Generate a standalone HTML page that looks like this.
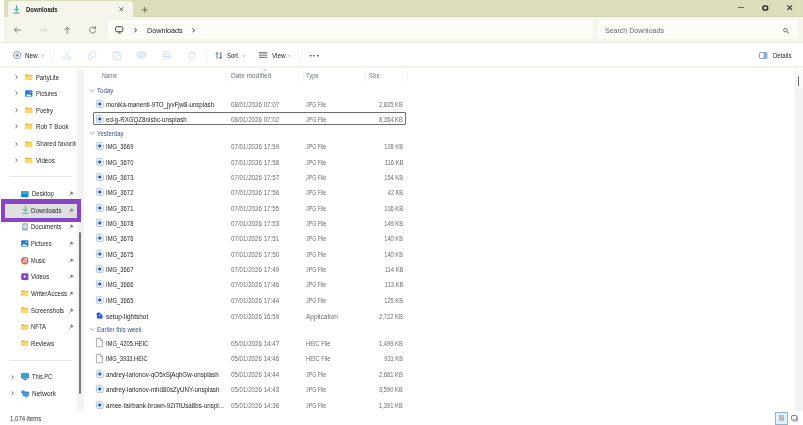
<!DOCTYPE html>
<html><head><meta charset="utf-8"><title>Downloads</title>
<style>
html,body{margin:0;padding:0;}
body{width:803px;height:425px;overflow:hidden;background:#fff;position:relative;font-family:"Liberation Sans",sans-serif;font-size:7px;color:#444;}
#w{position:absolute;left:0;top:0;width:803px;height:425px;filter:blur(0.35px);will-change:transform;}
.a{position:absolute;}
.t{position:absolute;white-space:nowrap;line-height:10px;height:10px;font-size:7px;transform-origin:0 50%;}
.r{transform-origin:100% 50%;}
svg{position:absolute;overflow:visible;}
</style></head><body>
<div id="w">
<div class="a" style="left:0px;top:0px;width:803px;height:17px;background:#dcddba;"></div>
<div class="a" style="left:0px;top:0px;width:3.5px;height:43px;background:#fcfcf8;"></div>
<div class="a" style="left:133px;top:16px;width:670px;height:1px;background:#d4d5b4;"></div>
<div class="a" style="left:7.5px;top:1px;width:125.5px;height:16.5px;background:#f5f5ec;border-radius:4px 4px 0 0;"></div>
<svg style="left:13px;top:5px" width="7" height="9" viewBox="0 0 7 9"><path d="M3.5 0.3V5.8M1 3.6L3.5 6L6 3.6" stroke="#2fa98a" stroke-width="1" fill="none"/><path d="M0.3 8H6.7" stroke="#2fa98a" stroke-width="1"/></svg>
<div class="t" style="left:26px;top:5.1px;color:#222;font-size:7px;transform:scaleX(0.846);font-weight:bold;">Downloads</div>
<svg style="left:119.3px;top:6.8px" width="4.6" height="4.6" viewBox="0 0 4.6 4.6"><path d="M0.3 0.3L4.3 4.3M4.3 0.3L0.3 4.3" stroke="#444" stroke-width="0.8"/></svg>
<svg style="left:142px;top:6.8px" width="5.6" height="5.6" viewBox="0 0 5.6 5.6"><path d="M2.8 0V5.6M0 2.8H5.6" stroke="#55553a" stroke-width="0.8"/></svg>
<div class="a" style="left:738.3px;top:6.8px;width:5.6px;height:0.9px;background:#6a6a58;"></div>
<svg style="left:761.5px;top:4.5px" width="6.6" height="6" viewBox="0 0 6.6 6"><rect x="1" y="1" width="4.6" height="4" fill="none" stroke="#333" stroke-width="1.7" rx="1.6"/></svg>
<svg style="left:786.8px;top:4.8px" width="5.4" height="5.2" viewBox="0 0 5.4 5.2"><path d="M0.3 0.3L5.1 4.9M5.1 0.3L0.3 4.9" stroke="#333" stroke-width="1.1"/></svg>
<div class="a" style="left:3.5px;top:17px;width:799.5px;height:25.5px;background:#f5f5ec;"></div>
<div class="a" style="left:108px;top:19.8px;width:485.4px;height:19.4px;background:#fdfdf8;border-radius:2px;"></div>
<div class="a" style="left:596.6px;top:19.8px;width:201.2px;height:19.4px;background:#fdfdf8;border-radius:2px;"></div>
<svg style="left:14px;top:27px" width="7" height="6" viewBox="0 0 7 6"><path d="M6.8 3H0.6M3 0.4L0.4 3L3 5.6" stroke="#606060" stroke-width="0.8" fill="none"/></svg>
<svg style="left:40px;top:27px" width="7" height="6" viewBox="0 0 7 6"><path d="M0.2 3H6.4M4 0.4L6.6 3L4 5.6" stroke="#cdcdc4" stroke-width="0.8" fill="none"/></svg>
<svg style="left:64px;top:26.5px" width="6.4" height="7" viewBox="0 0 6.4 7"><path d="M3.2 6.8V0.6M0.6 3L3.2 0.4L5.8 3" stroke="#606060" stroke-width="0.8" fill="none"/></svg>
<svg style="left:88.8px;top:26.2px" width="7.2" height="7.4" viewBox="0 0 7.2 7.4"><path d="M6 2.2A3 3 0 1 0 6.6 4.3" stroke="#606060" stroke-width="0.8" fill="none"/><path d="M6.5 0.4V2.4H4.5" stroke="#606060" stroke-width="0.8" fill="none"/></svg>
<svg style="left:115.2px;top:26px" width="8.5" height="7.6" viewBox="0 0 8.5 7.6"><rect x="0.7" y="0.7" width="7.1" height="5" rx="1" fill="none" stroke="#444" stroke-width="1"/><path d="M2.8 7H5.7" stroke="#444" stroke-width="1"/></svg>
<svg style="left:133.6px;top:28px" width="3.2" height="4.4" viewBox="0 0 3.2 4.4"><path d="M0.5 0.3L2.6 2.2L0.5 4.1" stroke="#333" stroke-width="1" fill="none"/></svg>
<div class="t" style="left:146.7px;top:25.5px;color:#222;font-size:8px;transform:scaleX(0.902);">Downloads</div>
<svg style="left:192.2px;top:28px" width="3.2" height="4.4" viewBox="0 0 3.2 4.4"><path d="M0.5 0.3L2.6 2.2L0.5 4.1" stroke="#333" stroke-width="1" fill="none"/></svg>
<div class="t" style="left:605.3px;top:26.0px;color:#666;font-size:7.6px;transform:scaleX(0.924);">Search Downloads</div>
<svg style="left:783.4px;top:27.5px" width="6.4" height="5.4" viewBox="0 0 6.4 5.4"><circle cx="2.4" cy="2.2" r="1.8" fill="none" stroke="#555" stroke-width="0.8"/><path d="M3.8 3.6L5.8 5.2" stroke="#555" stroke-width="0.9"/></svg>
<div class="a" style="left:0px;top:42.3px;width:803px;height:0.9px;background:#ebebdf;"></div>
<div class="a" style="left:0px;top:65.8px;width:803px;height:2px;background:#f2f2ec;"></div>
<svg style="left:12.5px;top:51px" width="8.4" height="8.4" viewBox="0 0 8.4 8.4"><circle cx="4.2" cy="4.2" r="3.6" fill="none" stroke="#8590a2" stroke-width="0.9"/><path d="M4.2 2.4V6M2.4 4.2H6" stroke="#3c6aa8" stroke-width="0.8"/></svg>
<div class="t" style="left:25.3px;top:51.1px;color:#222;font-size:7.4px;transform:scaleX(0.858);">New</div>
<svg style="left:41.3px;top:54.6px" width="3" height="2" viewBox="0 0 3 2"><path d="M0.2 0.3L1.5 1.6L2.8 0.3" stroke="#888" stroke-width="0.6" fill="none"/></svg>
<div class="a" style="left:53px;top:49px;width:0.8px;height:13px;background:#f5f5f5;"></div>
<svg style="left:62.7px;top:51px" width="7.8" height="9" viewBox="0 0 7.8 9"><path d="M1.5 0.5L5.5 5.5M6.3 0.5L2.3 5.5" stroke="#d3dfed" stroke-width="0.9" fill="none"/><circle cx="1.8" cy="7" r="1.4" fill="none" stroke="#d3dfed" stroke-width="0.9"/><circle cx="6" cy="7" r="1.4" fill="none" stroke="#d3dfed" stroke-width="0.9"/></svg>
<svg style="left:87.7px;top:51px" width="8.3" height="9" viewBox="0 0 8.3 9"><rect x="2.8" y="0.5" width="5" height="5.6" rx="1" fill="none" stroke="#d3dfed" stroke-width="0.9"/><path d="M2.2 2.6H1.4Q0.5 2.6 0.5 3.5V7.6Q0.5 8.5 1.4 8.5H4.2Q5 8.5 5 7.6" fill="none" stroke="#d3dfed" stroke-width="0.9"/></svg>
<svg style="left:112.8px;top:51px" width="8" height="9" viewBox="0 0 8 9"><rect x="0.5" y="1.2" width="6.6" height="7.3" rx="1" fill="none" stroke="#d3dfed" stroke-width="0.9"/><rect x="2.2" y="0.3" width="3.2" height="1.8" rx="0.6" fill="#d3dfed"/><rect x="3.6" y="4" width="3.8" height="4.8" fill="#fff" stroke="#d3dfed" stroke-width="0.8"/></svg>
<svg style="left:137.1px;top:51px" width="9.3" height="9" viewBox="0 0 9.3 9"><rect x="0.5" y="1" width="8.2" height="5.4" rx="1" fill="#d3dfed" opacity="0.55"/><rect x="0.5" y="1" width="8.2" height="5.4" rx="1" fill="none" stroke="#d3dfed" stroke-width="0.9"/><path d="M3.4 6.6V8.6L5.8 6.6" fill="#d3dfed"/></svg>
<svg style="left:162.7px;top:51px" width="7.8" height="9" viewBox="0 0 7.8 9"><rect x="0.5" y="0.8" width="6.8" height="7.4" rx="1" fill="none" stroke="#d3dfed" stroke-width="0.9"/><path d="M0.5 3.2H7.3M0.5 5.6H7.3" stroke="#d3dfed" stroke-width="1.1"/></svg>
<svg style="left:188px;top:51px" width="8" height="9" viewBox="0 0 8 9"><path d="M1.2 2.2L1.8 7.8Q1.9 8.5 2.6 8.5H5.4Q6.1 8.5 6.2 7.8L6.8 2.2" fill="none" stroke="#d3dfed" stroke-width="0.9"/><path d="M0.3 2.2H7.7M2.8 2V0.8H5.2V2" stroke="#d3dfed" stroke-width="0.9" fill="none"/></svg>
<div class="a" style="left:206px;top:49px;width:0.8px;height:13px;background:#f5f5f5;"></div>
<svg style="left:214.8px;top:51.9px" width="8" height="7" viewBox="0 0 8 7"><path d="M2 6.8V0.6M0.4 2.2L2 0.5L3.6 2.2" stroke="#3c6aa8" stroke-width="0.9" fill="none"/><path d="M5.8 0.2V6.4M4.2 4.8L5.8 6.5L7.4 4.8" stroke="#555" stroke-width="0.9" fill="none"/></svg>
<div class="t" style="left:227px;top:51.1px;color:#222;font-size:7.4px;transform:scaleX(0.811);">Sort</div>
<svg style="left:241.5px;top:54.6px" width="3" height="2" viewBox="0 0 3 2"><path d="M0.2 0.3L1.5 1.6L2.8 0.3" stroke="#888" stroke-width="0.6" fill="none"/></svg>
<svg style="left:259.3px;top:52.2px" width="8.3" height="6.2" viewBox="0 0 8.3 6.2"><path d="M0 0.8H8.3M0 3.1H8.3M0 5.4H8.3" stroke="#888" stroke-width="1.4"/></svg>
<div class="t" style="left:271.8px;top:51.1px;color:#222;font-size:7.4px;transform:scaleX(0.856);">View</div>
<svg style="left:288.2px;top:54.6px" width="3" height="2" viewBox="0 0 3 2"><path d="M0.2 0.3L1.5 1.6L2.8 0.3" stroke="#888" stroke-width="0.6" fill="none"/></svg>
<div class="a" style="left:300.8px;top:49px;width:0.8px;height:13px;background:#f5f5f5;"></div>
<svg style="left:310.2px;top:54.9px" width="1.6" height="1.6" viewBox="0 0 1.6 1.6"><circle cx="0.8" cy="0.8" r="0.8" fill="#222"/></svg>
<svg style="left:313.4px;top:54.9px" width="1.6" height="1.6" viewBox="0 0 1.6 1.6"><circle cx="0.8" cy="0.8" r="0.8" fill="#222"/></svg>
<svg style="left:316.59999999999997px;top:54.9px" width="1.6" height="1.6" viewBox="0 0 1.6 1.6"><circle cx="0.8" cy="0.8" r="0.8" fill="#222"/></svg>
<svg style="left:759.4px;top:52px" width="8.5" height="7" viewBox="0 0 8.5 7"><rect x="0.5" y="0.5" width="7.5" height="6" rx="1" fill="#fff" stroke="#8a97a8" stroke-width="0.9"/><rect x="4.6" y="1" width="2.9" height="5" fill="#6fb0e8"/></svg>
<div class="t" style="left:772.5px;top:51.1px;color:#222;font-size:7px;transform:scaleX(0.86);">Details</div>
<div class="a" style="left:76.6px;top:69px;width:7.4px;height:342.4px;background:#f3f3f3;"></div>
<div class="a" style="left:79.4px;top:232.3px;width:1.8px;height:162px;background:#7a7a7a;border-radius:1px;"></div>
<svg style="left:14.8px;top:75.0px" width="3" height="4.4" viewBox="0 0 3 4.4"><path d="M0.5 0.4L2.4 2.2L0.5 4" stroke="#555" stroke-width="0.85" fill="none"/></svg>
<svg style="left:25.2px;top:74.0px" width="7.4" height="6.2" viewBox="0 0 7.4 6.2"><path d="M0.2 0.9Q0.2 0.3 0.8 0.3H2.7L3.6 1.1H6.6Q7.2 1.1 7.2 1.7V5.4Q7.2 6 6.6 6H0.8Q0.2 6 0.2 5.4Z" fill="#efb935"/><path d="M0.2 2H7.2V5.4Q7.2 6 6.6 6H0.8Q0.2 6 0.2 5.4Z" fill="#fbd868"/></svg>
<div class="t" style="left:36px;top:72.7px;color:#262626;font-size:7px;transform:scaleX(0.829);">PartyLite</div>
<svg style="left:14.8px;top:91.3px" width="3" height="4.4" viewBox="0 0 3 4.4"><path d="M0.5 0.4L2.4 2.2L0.5 4" stroke="#555" stroke-width="0.85" fill="none"/></svg>
<svg style="left:25px;top:89.9px" width="7.6" height="7.2" viewBox="0 0 7.6 7.2"><rect x="0.2" y="0.2" width="7.2" height="6.8" rx="1" fill="#1f74d4"/><path d="M0.7 6.4L2.9 3.6L4.2 5L5.2 4.2L7 6.4Z" fill="#e4f1ff"/><circle cx="5.3" cy="2.2" r="0.8" fill="#e4f1ff"/></svg>
<div class="t" style="left:36px;top:89.0px;color:#262626;font-size:7px;transform:scaleX(0.838);">Pictures</div>
<svg style="left:14.8px;top:108.1px" width="3" height="4.4" viewBox="0 0 3 4.4"><path d="M0.5 0.4L2.4 2.2L0.5 4" stroke="#555" stroke-width="0.85" fill="none"/></svg>
<svg style="left:25.2px;top:107.1px" width="7.4" height="6.2" viewBox="0 0 7.4 6.2"><path d="M0.2 0.9Q0.2 0.3 0.8 0.3H2.7L3.6 1.1H6.6Q7.2 1.1 7.2 1.7V5.4Q7.2 6 6.6 6H0.8Q0.2 6 0.2 5.4Z" fill="#efb935"/><path d="M0.2 2H7.2V5.4Q7.2 6 6.6 6H0.8Q0.2 6 0.2 5.4Z" fill="#fbd868"/></svg>
<div class="t" style="left:36px;top:105.8px;color:#262626;font-size:7px;transform:scaleX(0.84);">Poetry</div>
<svg style="left:14.8px;top:124.39999999999999px" width="3" height="4.4" viewBox="0 0 3 4.4"><path d="M0.5 0.4L2.4 2.2L0.5 4" stroke="#555" stroke-width="0.85" fill="none"/></svg>
<svg style="left:25.2px;top:123.39999999999999px" width="7.4" height="6.2" viewBox="0 0 7.4 6.2"><path d="M0.2 0.9Q0.2 0.3 0.8 0.3H2.7L3.6 1.1H6.6Q7.2 1.1 7.2 1.7V5.4Q7.2 6 6.6 6H0.8Q0.2 6 0.2 5.4Z" fill="#efb935"/><path d="M0.2 2H7.2V5.4Q7.2 6 6.6 6H0.8Q0.2 6 0.2 5.4Z" fill="#fbd868"/></svg>
<div class="t" style="left:36px;top:122.1px;color:#262626;font-size:7px;transform:scaleX(0.885);">Rob T Book</div>
<svg style="left:14.8px;top:141.5px" width="3" height="4.4" viewBox="0 0 3 4.4"><path d="M0.5 0.4L2.4 2.2L0.5 4" stroke="#555" stroke-width="0.85" fill="none"/></svg>
<svg style="left:25.2px;top:140.5px" width="7.4" height="6.2" viewBox="0 0 7.4 6.2"><path d="M0.2 0.9Q0.2 0.3 0.8 0.3H2.7L3.6 1.1H6.6Q7.2 1.1 7.2 1.7V5.4Q7.2 6 6.6 6H0.8Q0.2 6 0.2 5.4Z" fill="#efb935"/><path d="M0.2 2H7.2V5.4Q7.2 6 6.6 6H0.8Q0.2 6 0.2 5.4Z" fill="#fbd868"/></svg>
<div class="a" style="left:36px;top:139.2px;width:39.9px;height:10px;overflow:hidden;">
<div class="t" style="left:0px;top:0.0px;color:#333;font-size:7px;transform:scaleX(0.902);">Shared favorites</div>
</div>
<svg style="left:14.8px;top:157.9px" width="3" height="4.4" viewBox="0 0 3 4.4"><path d="M0.5 0.4L2.4 2.2L0.5 4" stroke="#555" stroke-width="0.85" fill="none"/></svg>
<svg style="left:25.2px;top:156.9px" width="7.4" height="6.2" viewBox="0 0 7.4 6.2"><path d="M0.2 0.9Q0.2 0.3 0.8 0.3H2.7L3.6 1.1H6.6Q7.2 1.1 7.2 1.7V5.4Q7.2 6 6.6 6H0.8Q0.2 6 0.2 5.4Z" fill="#efb935"/><path d="M0.2 2H7.2V5.4Q7.2 6 6.6 6H0.8Q0.2 6 0.2 5.4Z" fill="#fbd868"/></svg>
<div class="t" style="left:36px;top:155.6px;color:#262626;font-size:7px;transform:scaleX(0.888);">Videos</div>
<div class="a" style="left:8.5px;top:176.3px;width:63px;height:0.8px;background:#e8e8e8;"></div>
<div class="a" style="left:1.2px;top:199.3px;width:80.1px;height:22.7px;background:#8a42c6;"></div>
<div class="a" style="left:4.7px;top:203.5px;width:72.4px;height:14.3px;background:#dfdfdf;"></div>
<div class="a" style="left:79.7px;top:222px;width:1.5px;height:10.3px;background:#f0f0f0;"></div>
<svg style="left:21.2px;top:190.5px" width="7.6" height="6.4" viewBox="0 0 7.6 6.4"><rect x="0.1" y="0.1" width="7.4" height="6.2" rx="0.8" fill="#1b86c6"/><rect x="0.1" y="0.1" width="7.4" height="3.2" rx="0.8" fill="#35acd8"/></svg>
<div class="t" style="left:31.8px;top:189.2px;color:#262626;font-size:7px;transform:scaleX(0.853);">Desktop</div>
<svg style="left:68.8px;top:191.1px" width="4.8" height="5.2" viewBox="0 0 4.8 5.2"><path d="M2.4 0.2L4.6 2.4L3.6 2.8L3.1 4L0.9 1.8L2 1.3Z" fill="#778"/><path d="M1.8 3L0.3 4.8" stroke="#778" stroke-width="0.7"/></svg>
<svg style="left:21.8px;top:206.2px" width="6.6" height="8" viewBox="0 0 6.6 8"><path d="M3.3 0.2V5M1 3L3.3 5.2L5.6 3" stroke="#2fa98a" stroke-width="0.9" fill="none"/><path d="M0.3 7.2H6.3" stroke="#2fa98a" stroke-width="0.9"/></svg>
<div class="t" style="left:31.4px;top:205.7px;color:#262626;font-size:7px;transform:scaleX(0.883);">Downloads</div>
<svg style="left:68.8px;top:207.6px" width="4.8" height="5.2" viewBox="0 0 4.8 5.2"><path d="M2.4 0.2L4.6 2.4L3.6 2.8L3.1 4L0.9 1.8L2 1.3Z" fill="#778"/><path d="M1.8 3L0.3 4.8" stroke="#778" stroke-width="0.7"/></svg>
<svg style="left:22.0px;top:222.7px" width="6" height="7.6" viewBox="0 0 6 7.6"><rect x="0.2" y="0.2" width="5.6" height="7.2" rx="0.8" fill="#8ea3c0"/><rect x="1.1" y="1.3" width="3.8" height="4.4" fill="#cfdaea"/></svg>
<div class="t" style="left:31.4px;top:222.0px;color:#262626;font-size:7px;transform:scaleX(0.864);">Documents</div>
<svg style="left:68.8px;top:223.9px" width="4.8" height="5.2" viewBox="0 0 4.8 5.2"><path d="M2.4 0.2L4.6 2.4L3.6 2.8L3.1 4L0.9 1.8L2 1.3Z" fill="#778"/><path d="M1.8 3L0.3 4.8" stroke="#778" stroke-width="0.7"/></svg>
<svg style="left:21.2px;top:240.0px" width="7.6" height="7.2" viewBox="0 0 7.6 7.2"><rect x="0.2" y="0.2" width="7.2" height="6.8" rx="1" fill="#1f74d4"/><path d="M0.7 6.4L2.9 3.6L4.2 5L5.2 4.2L7 6.4Z" fill="#e4f1ff"/><circle cx="5.3" cy="2.2" r="0.8" fill="#e4f1ff"/></svg>
<div class="t" style="left:31.2px;top:239.1px;color:#262626;font-size:7px;transform:scaleX(0.81);">Pictures</div>
<svg style="left:68.8px;top:241.0px" width="4.8" height="5.2" viewBox="0 0 4.8 5.2"><path d="M2.4 0.2L4.6 2.4L3.6 2.8L3.1 4L0.9 1.8L2 1.3Z" fill="#778"/><path d="M1.8 3L0.3 4.8" stroke="#778" stroke-width="0.7"/></svg>
<svg style="left:21.2px;top:256.5px" width="7.6" height="7.6" viewBox="0 0 7.6 7.6"><circle cx="3.8" cy="3.8" r="3.7" fill="#d0695c"/><path d="M3 5.4V2.2L5.2 1.7V4.8" stroke="#fff" stroke-width="0.7" fill="none"/><circle cx="2.5" cy="5.4" r="0.7" fill="#fff"/><circle cx="4.7" cy="4.8" r="0.7" fill="#fff"/></svg>
<div class="t" style="left:31.2px;top:255.8px;color:#262626;font-size:7px;transform:scaleX(0.799);">Music</div>
<svg style="left:68.8px;top:257.7px" width="4.8" height="5.2" viewBox="0 0 4.8 5.2"><path d="M2.4 0.2L4.6 2.4L3.6 2.8L3.1 4L0.9 1.8L2 1.3Z" fill="#778"/><path d="M1.8 3L0.3 4.8" stroke="#778" stroke-width="0.7"/></svg>
<svg style="left:21.2px;top:273.2px" width="7.6" height="7.2" viewBox="0 0 7.6 7.2"><rect x="0.2" y="0.2" width="7.2" height="6.8" rx="1" fill="#8a3fd0"/><path d="M2.9 2.1L5.3 3.6L2.9 5.1Z" fill="#fff"/></svg>
<div class="t" style="left:31.2px;top:272.3px;color:#262626;font-size:7px;transform:scaleX(0.851);">Videos</div>
<svg style="left:68.8px;top:274.2px" width="4.8" height="5.2" viewBox="0 0 4.8 5.2"><path d="M2.4 0.2L4.6 2.4L3.6 2.8L3.1 4L0.9 1.8L2 1.3Z" fill="#778"/><path d="M1.8 3L0.3 4.8" stroke="#778" stroke-width="0.7"/></svg>
<svg style="left:21.4px;top:290.40000000000003px" width="7.4" height="6.2" viewBox="0 0 7.4 6.2"><path d="M0.2 0.9Q0.2 0.3 0.8 0.3H2.7L3.6 1.1H6.6Q7.2 1.1 7.2 1.7V5.4Q7.2 6 6.6 6H0.8Q0.2 6 0.2 5.4Z" fill="#efb935"/><path d="M0.2 2H7.2V5.4Q7.2 6 6.6 6H0.8Q0.2 6 0.2 5.4Z" fill="#fbd868"/></svg>
<div class="t" style="left:31.3px;top:289.1px;color:#262626;font-size:7px;transform:scaleX(0.881);">WriterAccess</div>
<svg style="left:68.8px;top:291.0px" width="4.8" height="5.2" viewBox="0 0 4.8 5.2"><path d="M2.4 0.2L4.6 2.4L3.6 2.8L3.1 4L0.9 1.8L2 1.3Z" fill="#778"/><path d="M1.8 3L0.3 4.8" stroke="#778" stroke-width="0.7"/></svg>
<svg style="left:21.4px;top:307.2px" width="7.4" height="6.2" viewBox="0 0 7.4 6.2"><path d="M0.2 0.9Q0.2 0.3 0.8 0.3H2.7L3.6 1.1H6.6Q7.2 1.1 7.2 1.7V5.4Q7.2 6 6.6 6H0.8Q0.2 6 0.2 5.4Z" fill="#efb935"/><path d="M0.2 2H7.2V5.4Q7.2 6 6.6 6H0.8Q0.2 6 0.2 5.4Z" fill="#fbd868"/></svg>
<div class="t" style="left:31.3px;top:305.9px;color:#262626;font-size:7px;transform:scaleX(0.85);">Screenshots</div>
<svg style="left:68.8px;top:307.79999999999995px" width="4.8" height="5.2" viewBox="0 0 4.8 5.2"><path d="M2.4 0.2L4.6 2.4L3.6 2.8L3.1 4L0.9 1.8L2 1.3Z" fill="#778"/><path d="M1.8 3L0.3 4.8" stroke="#778" stroke-width="0.7"/></svg>
<svg style="left:21.4px;top:323.6px" width="7.4" height="6.2" viewBox="0 0 7.4 6.2"><path d="M0.2 0.9Q0.2 0.3 0.8 0.3H2.7L3.6 1.1H6.6Q7.2 1.1 7.2 1.7V5.4Q7.2 6 6.6 6H0.8Q0.2 6 0.2 5.4Z" fill="#efb935"/><path d="M0.2 2H7.2V5.4Q7.2 6 6.6 6H0.8Q0.2 6 0.2 5.4Z" fill="#fbd868"/></svg>
<div class="t" style="left:31.3px;top:322.3px;color:#262626;font-size:7px;transform:scaleX(0.844);">NFTA</div>
<svg style="left:68.8px;top:324.2px" width="4.8" height="5.2" viewBox="0 0 4.8 5.2"><path d="M2.4 0.2L4.6 2.4L3.6 2.8L3.1 4L0.9 1.8L2 1.3Z" fill="#778"/><path d="M1.8 3L0.3 4.8" stroke="#778" stroke-width="0.7"/></svg>
<svg style="left:21.4px;top:340.3px" width="7.4" height="6.2" viewBox="0 0 7.4 6.2"><path d="M0.2 0.9Q0.2 0.3 0.8 0.3H2.7L3.6 1.1H6.6Q7.2 1.1 7.2 1.7V5.4Q7.2 6 6.6 6H0.8Q0.2 6 0.2 5.4Z" fill="#efb935"/><path d="M0.2 2H7.2V5.4Q7.2 6 6.6 6H0.8Q0.2 6 0.2 5.4Z" fill="#fbd868"/></svg>
<div class="t" style="left:31.3px;top:339.0px;color:#262626;font-size:7px;transform:scaleX(0.866);">Reviews</div>
<div class="a" style="left:8.5px;top:360.2px;width:63px;height:0.8px;background:#e8e8e8;"></div>
<svg style="left:10.8px;top:374.6px" width="3" height="4.4" viewBox="0 0 3 4.4"><path d="M0.5 0.4L2.4 2.2L0.5 4" stroke="#555" stroke-width="0.85" fill="none"/></svg>
<svg style="left:10.8px;top:391.1px" width="3" height="4.4" viewBox="0 0 3 4.4"><path d="M0.5 0.4L2.4 2.2L0.5 4" stroke="#555" stroke-width="0.85" fill="none"/></svg>
<svg style="left:21px;top:373.2px" width="8" height="7.2" viewBox="0 0 8 7.2"><rect x="0.4" y="0.4" width="7.2" height="4.8" rx="0.6" fill="#35a2e0" stroke="#2a5f90" stroke-width="0.6"/><path d="M2.4 6.6H5.6" stroke="#2a5f90" stroke-width="0.9"/></svg>
<div class="t" style="left:31.6px;top:372.3px;color:#262626;font-size:7px;transform:scaleX(0.811);">This PC</div>
<svg style="left:21px;top:389.6px" width="8" height="7.2" viewBox="0 0 8 7.2"><rect x="2.2" y="2" width="5.6" height="3.8" rx="0.6" fill="#35a2e0" stroke="#2a5f90" stroke-width="0.6"/><circle cx="2.2" cy="2.2" r="2" fill="#3f96d8"/><path d="M4 6.8H6.6" stroke="#2a5f90" stroke-width="0.8"/></svg>
<div class="t" style="left:31.6px;top:388.8px;color:#262626;font-size:7px;transform:scaleX(0.934);">Network</div>
<div class="t" style="left:10.2px;top:414.1px;color:#333;font-size:7px;transform:scaleX(0.868);">1,074 items</div>
<div class="t" style="left:102px;top:71.0px;color:#6b7586;font-size:6.5px;transform:scaleX(0.875);">Name</div>
<div class="t" style="left:231.2px;top:71.0px;color:#6b7586;font-size:6.5px;transform:scaleX(1.007);">Date modified</div>
<div class="t" style="left:306.2px;top:71.0px;color:#6b7586;font-size:6.5px;transform:scaleX(0.901);">Type</div>
<div class="t" style="left:368.7px;top:71.0px;color:#6b7586;font-size:6.5px;transform:scaleX(0.845);">Size</div>
<div class="a" style="left:226px;top:69.5px;width:0.8px;height:12.5px;background:#f2f2f2;"></div>
<div class="a" style="left:302.5px;top:69.5px;width:0.8px;height:12.5px;background:#f2f2f2;"></div>
<div class="a" style="left:365px;top:69.5px;width:0.8px;height:12.5px;background:#f2f2f2;"></div>
<div class="a" style="left:406.6px;top:69.5px;width:0.8px;height:12.5px;background:#f2f2f2;"></div>
<svg style="left:262.8px;top:68.8px" width="4.4" height="2" viewBox="0 0 4.4 2"><path d="M0.3 0.3L2.2 1.7L4.1 0.3" stroke="#888" stroke-width="0.6" fill="none"/></svg>
<svg style="left:89.6px;top:89.19999999999999px" width="4.6" height="3" viewBox="0 0 4.6 3"><path d="M0.4 0.4L2.3 2.3L4.2 0.4" stroke="#778" stroke-width="0.7" fill="none"/></svg>
<div class="t" style="left:97px;top:86.1px;color:#3b4f8a;font-size:7px;transform:scaleX(0.875);">Today</div>
<svg style="left:96px;top:100.3px" width="7.6" height="7.8" viewBox="0 0 7.6 7.8"><path d="M1.4 0.4H5L7.2 2.6V6.4Q7.2 7.4 6.2 7.4H1.4Q0.4 7.4 0.4 6.4V1.4Q0.4 0.4 1.4 0.4Z" fill="#fff" stroke="#a3b3cb" stroke-width="0.8"/><circle cx="3.7" cy="4" r="2.5" fill="#c4dcf4"/><circle cx="3.7" cy="4.1" r="1.5" fill="#2859a4"/></svg>
<div class="t" style="left:106px;top:100.2px;color:#1e1e1e;font-size:7px;transform:scaleX(0.877);">monika-manenti-9TO_jyvFjw8-unsplash</div>
<div class="t" style="left:231.2px;top:100.2px;color:#6c6c6c;font-size:7px;transform:scaleX(0.883);">08/01/2026 07:07</div>
<div class="t" style="left:306.2px;top:100.2px;color:#6c6c6c;font-size:7px;transform:scaleX(0.756);">JPG File</div>
<div class="t r" style="right:399.8px;top:100.2px;color:#6c6c6c;font-size:7px;transform:scaleX(0.826);">2,825 KB</div>
<div class="a" style="left:93px;top:112.1px;width:313px;height:13.3px;border:1px solid #6e6e6e;border-radius:1px;box-sizing:border-box;"></div>
<svg style="left:96px;top:115.19999999999999px" width="7.6" height="7.8" viewBox="0 0 7.6 7.8"><path d="M1.4 0.4H5L7.2 2.6V6.4Q7.2 7.4 6.2 7.4H1.4Q0.4 7.4 0.4 6.4V1.4Q0.4 0.4 1.4 0.4Z" fill="#fff" stroke="#a3b3cb" stroke-width="0.8"/><circle cx="3.7" cy="4" r="2.5" fill="#c4dcf4"/><circle cx="3.7" cy="4.1" r="1.5" fill="#2859a4"/></svg>
<div class="t" style="left:106px;top:115.1px;color:#1e1e1e;font-size:7px;transform:scaleX(0.874);">ed-g-RXGQZ8nIsbc-unsplash</div>
<div class="t" style="left:231.2px;top:115.1px;color:#6c6c6c;font-size:7px;transform:scaleX(0.883);">08/01/2026 07:02</div>
<div class="t" style="left:306.2px;top:115.1px;color:#6c6c6c;font-size:7px;transform:scaleX(0.756);">JPG File</div>
<div class="t r" style="right:399.8px;top:115.1px;color:#6c6c6c;font-size:7px;transform:scaleX(0.826);">8,354 KB</div>
<svg style="left:89.6px;top:131.6px" width="4.6" height="3" viewBox="0 0 4.6 3"><path d="M0.4 0.4L2.3 2.3L4.2 0.4" stroke="#778" stroke-width="0.7" fill="none"/></svg>
<div class="t" style="left:97px;top:128.5px;color:#3b4f8a;font-size:7px;transform:scaleX(0.858);">Yesterday</div>
<svg style="left:96px;top:142.29999999999998px" width="7.6" height="7.8" viewBox="0 0 7.6 7.8"><path d="M1.4 0.4H5L7.2 2.6V6.4Q7.2 7.4 6.2 7.4H1.4Q0.4 7.4 0.4 6.4V1.4Q0.4 0.4 1.4 0.4Z" fill="#fff" stroke="#a3b3cb" stroke-width="0.8"/><circle cx="3.7" cy="4" r="2.5" fill="#c4dcf4"/><circle cx="3.7" cy="4.1" r="1.5" fill="#2859a4"/></svg>
<div class="t" style="left:106px;top:142.2px;color:#1e1e1e;font-size:7px;transform:scaleX(0.838);">IMG_3669</div>
<div class="t" style="left:231.2px;top:142.2px;color:#6c6c6c;font-size:7px;transform:scaleX(0.883);">07/01/2026 17:59</div>
<div class="t" style="left:306.2px;top:142.2px;color:#6c6c6c;font-size:7px;transform:scaleX(0.756);">JPG File</div>
<div class="t r" style="right:399.8px;top:142.2px;color:#6c6c6c;font-size:7px;transform:scaleX(0.814);">128 KB</div>
<svg style="left:96px;top:157.65px" width="7.6" height="7.8" viewBox="0 0 7.6 7.8"><path d="M1.4 0.4H5L7.2 2.6V6.4Q7.2 7.4 6.2 7.4H1.4Q0.4 7.4 0.4 6.4V1.4Q0.4 0.4 1.4 0.4Z" fill="#fff" stroke="#a3b3cb" stroke-width="0.8"/><circle cx="3.7" cy="4" r="2.5" fill="#c4dcf4"/><circle cx="3.7" cy="4.1" r="1.5" fill="#2859a4"/></svg>
<div class="t" style="left:106px;top:157.55px;color:#1e1e1e;font-size:7px;transform:scaleX(0.838);">IMG_3670</div>
<div class="t" style="left:231.2px;top:157.55px;color:#6c6c6c;font-size:7px;transform:scaleX(0.883);">07/01/2026 17:58</div>
<div class="t" style="left:306.2px;top:157.55px;color:#6c6c6c;font-size:7px;transform:scaleX(0.756);">JPG File</div>
<div class="t r" style="right:399.8px;top:157.55px;color:#6c6c6c;font-size:7px;transform:scaleX(0.833);">116 KB</div>
<svg style="left:96px;top:173.0px" width="7.6" height="7.8" viewBox="0 0 7.6 7.8"><path d="M1.4 0.4H5L7.2 2.6V6.4Q7.2 7.4 6.2 7.4H1.4Q0.4 7.4 0.4 6.4V1.4Q0.4 0.4 1.4 0.4Z" fill="#fff" stroke="#a3b3cb" stroke-width="0.8"/><circle cx="3.7" cy="4" r="2.5" fill="#c4dcf4"/><circle cx="3.7" cy="4.1" r="1.5" fill="#2859a4"/></svg>
<div class="t" style="left:106px;top:172.9px;color:#1e1e1e;font-size:7px;transform:scaleX(0.838);">IMG_3673</div>
<div class="t" style="left:231.2px;top:172.9px;color:#6c6c6c;font-size:7px;transform:scaleX(0.883);">07/01/2026 17:57</div>
<div class="t" style="left:306.2px;top:172.9px;color:#6c6c6c;font-size:7px;transform:scaleX(0.756);">JPG File</div>
<div class="t r" style="right:399.8px;top:172.9px;color:#6c6c6c;font-size:7px;transform:scaleX(0.814);">154 KB</div>
<svg style="left:96px;top:188.35px" width="7.6" height="7.8" viewBox="0 0 7.6 7.8"><path d="M1.4 0.4H5L7.2 2.6V6.4Q7.2 7.4 6.2 7.4H1.4Q0.4 7.4 0.4 6.4V1.4Q0.4 0.4 1.4 0.4Z" fill="#fff" stroke="#a3b3cb" stroke-width="0.8"/><circle cx="3.7" cy="4" r="2.5" fill="#c4dcf4"/><circle cx="3.7" cy="4.1" r="1.5" fill="#2859a4"/></svg>
<div class="t" style="left:106px;top:188.25px;color:#1e1e1e;font-size:7px;transform:scaleX(0.838);">IMG_3672</div>
<div class="t" style="left:231.2px;top:188.25px;color:#6c6c6c;font-size:7px;transform:scaleX(0.883);">07/01/2026 17:56</div>
<div class="t" style="left:306.2px;top:188.25px;color:#6c6c6c;font-size:7px;transform:scaleX(0.756);">JPG File</div>
<div class="t r" style="right:399.8px;top:188.25px;color:#6c6c6c;font-size:7px;transform:scaleX(0.797);">42 KB</div>
<svg style="left:96px;top:203.7px" width="7.6" height="7.8" viewBox="0 0 7.6 7.8"><path d="M1.4 0.4H5L7.2 2.6V6.4Q7.2 7.4 6.2 7.4H1.4Q0.4 7.4 0.4 6.4V1.4Q0.4 0.4 1.4 0.4Z" fill="#fff" stroke="#a3b3cb" stroke-width="0.8"/><circle cx="3.7" cy="4" r="2.5" fill="#c4dcf4"/><circle cx="3.7" cy="4.1" r="1.5" fill="#2859a4"/></svg>
<div class="t" style="left:106px;top:203.6px;color:#1e1e1e;font-size:7px;transform:scaleX(0.838);">IMG_3671</div>
<div class="t" style="left:231.2px;top:203.6px;color:#6c6c6c;font-size:7px;transform:scaleX(0.883);">07/01/2026 17:55</div>
<div class="t" style="left:306.2px;top:203.6px;color:#6c6c6c;font-size:7px;transform:scaleX(0.756);">JPG File</div>
<div class="t r" style="right:399.8px;top:203.6px;color:#6c6c6c;font-size:7px;transform:scaleX(0.814);">106 KB</div>
<svg style="left:96px;top:219.04999999999998px" width="7.6" height="7.8" viewBox="0 0 7.6 7.8"><path d="M1.4 0.4H5L7.2 2.6V6.4Q7.2 7.4 6.2 7.4H1.4Q0.4 7.4 0.4 6.4V1.4Q0.4 0.4 1.4 0.4Z" fill="#fff" stroke="#a3b3cb" stroke-width="0.8"/><circle cx="3.7" cy="4" r="2.5" fill="#c4dcf4"/><circle cx="3.7" cy="4.1" r="1.5" fill="#2859a4"/></svg>
<div class="t" style="left:106px;top:218.95px;color:#1e1e1e;font-size:7px;transform:scaleX(0.838);">IMG_3678</div>
<div class="t" style="left:231.2px;top:218.95px;color:#6c6c6c;font-size:7px;transform:scaleX(0.883);">07/01/2026 17:53</div>
<div class="t" style="left:306.2px;top:218.95px;color:#6c6c6c;font-size:7px;transform:scaleX(0.756);">JPG File</div>
<div class="t r" style="right:399.8px;top:218.95px;color:#6c6c6c;font-size:7px;transform:scaleX(0.814);">149 KB</div>
<svg style="left:96px;top:234.4px" width="7.6" height="7.8" viewBox="0 0 7.6 7.8"><path d="M1.4 0.4H5L7.2 2.6V6.4Q7.2 7.4 6.2 7.4H1.4Q0.4 7.4 0.4 6.4V1.4Q0.4 0.4 1.4 0.4Z" fill="#fff" stroke="#a3b3cb" stroke-width="0.8"/><circle cx="3.7" cy="4" r="2.5" fill="#c4dcf4"/><circle cx="3.7" cy="4.1" r="1.5" fill="#2859a4"/></svg>
<div class="t" style="left:106px;top:234.3px;color:#1e1e1e;font-size:7px;transform:scaleX(0.838);">IMG_3676</div>
<div class="t" style="left:231.2px;top:234.3px;color:#6c6c6c;font-size:7px;transform:scaleX(0.883);">07/01/2026 17:51</div>
<div class="t" style="left:306.2px;top:234.3px;color:#6c6c6c;font-size:7px;transform:scaleX(0.756);">JPG File</div>
<div class="t r" style="right:399.8px;top:234.3px;color:#6c6c6c;font-size:7px;transform:scaleX(0.814);">140 KB</div>
<svg style="left:96px;top:249.75px" width="7.6" height="7.8" viewBox="0 0 7.6 7.8"><path d="M1.4 0.4H5L7.2 2.6V6.4Q7.2 7.4 6.2 7.4H1.4Q0.4 7.4 0.4 6.4V1.4Q0.4 0.4 1.4 0.4Z" fill="#fff" stroke="#a3b3cb" stroke-width="0.8"/><circle cx="3.7" cy="4" r="2.5" fill="#c4dcf4"/><circle cx="3.7" cy="4.1" r="1.5" fill="#2859a4"/></svg>
<div class="t" style="left:106px;top:249.65px;color:#1e1e1e;font-size:7px;transform:scaleX(0.838);">IMG_3675</div>
<div class="t" style="left:231.2px;top:249.65px;color:#6c6c6c;font-size:7px;transform:scaleX(0.883);">07/01/2026 17:50</div>
<div class="t" style="left:306.2px;top:249.65px;color:#6c6c6c;font-size:7px;transform:scaleX(0.756);">JPG File</div>
<div class="t r" style="right:399.8px;top:249.65px;color:#6c6c6c;font-size:7px;transform:scaleX(0.814);">140 KB</div>
<svg style="left:96px;top:265.1px" width="7.6" height="7.8" viewBox="0 0 7.6 7.8"><path d="M1.4 0.4H5L7.2 2.6V6.4Q7.2 7.4 6.2 7.4H1.4Q0.4 7.4 0.4 6.4V1.4Q0.4 0.4 1.4 0.4Z" fill="#fff" stroke="#a3b3cb" stroke-width="0.8"/><circle cx="3.7" cy="4" r="2.5" fill="#c4dcf4"/><circle cx="3.7" cy="4.1" r="1.5" fill="#2859a4"/></svg>
<div class="t" style="left:106px;top:265.0px;color:#1e1e1e;font-size:7px;transform:scaleX(0.838);">IMG_3667</div>
<div class="t" style="left:231.2px;top:265.0px;color:#6c6c6c;font-size:7px;transform:scaleX(0.883);">07/01/2026 17:49</div>
<div class="t" style="left:306.2px;top:265.0px;color:#6c6c6c;font-size:7px;transform:scaleX(0.756);">JPG File</div>
<div class="t r" style="right:399.8px;top:265.0px;color:#6c6c6c;font-size:7px;transform:scaleX(0.833);">114 KB</div>
<svg style="left:96px;top:280.45000000000005px" width="7.6" height="7.8" viewBox="0 0 7.6 7.8"><path d="M1.4 0.4H5L7.2 2.6V6.4Q7.2 7.4 6.2 7.4H1.4Q0.4 7.4 0.4 6.4V1.4Q0.4 0.4 1.4 0.4Z" fill="#fff" stroke="#a3b3cb" stroke-width="0.8"/><circle cx="3.7" cy="4" r="2.5" fill="#c4dcf4"/><circle cx="3.7" cy="4.1" r="1.5" fill="#2859a4"/></svg>
<div class="t" style="left:106px;top:280.35px;color:#1e1e1e;font-size:7px;transform:scaleX(0.838);">IMG_3666</div>
<div class="t" style="left:231.2px;top:280.35px;color:#6c6c6c;font-size:7px;transform:scaleX(0.883);">07/01/2026 17:46</div>
<div class="t" style="left:306.2px;top:280.35px;color:#6c6c6c;font-size:7px;transform:scaleX(0.756);">JPG File</div>
<div class="t r" style="right:399.8px;top:280.35px;color:#6c6c6c;font-size:7px;transform:scaleX(0.833);">113 KB</div>
<svg style="left:96px;top:295.8px" width="7.6" height="7.8" viewBox="0 0 7.6 7.8"><path d="M1.4 0.4H5L7.2 2.6V6.4Q7.2 7.4 6.2 7.4H1.4Q0.4 7.4 0.4 6.4V1.4Q0.4 0.4 1.4 0.4Z" fill="#fff" stroke="#a3b3cb" stroke-width="0.8"/><circle cx="3.7" cy="4" r="2.5" fill="#c4dcf4"/><circle cx="3.7" cy="4.1" r="1.5" fill="#2859a4"/></svg>
<div class="t" style="left:106px;top:295.7px;color:#1e1e1e;font-size:7px;transform:scaleX(0.838);">IMG_3665</div>
<div class="t" style="left:231.2px;top:295.7px;color:#6c6c6c;font-size:7px;transform:scaleX(0.883);">07/01/2026 17:44</div>
<div class="t" style="left:306.2px;top:295.7px;color:#6c6c6c;font-size:7px;transform:scaleX(0.756);">JPG File</div>
<div class="t r" style="right:399.8px;top:295.7px;color:#6c6c6c;font-size:7px;transform:scaleX(0.814);">125 KB</div>
<svg style="left:96px;top:312.4px" width="7.4" height="7.2" viewBox="0 0 7.4 7.2"><circle cx="2.8" cy="2.6" r="2.2" fill="#1f4fae"/><circle cx="4.6" cy="4.6" r="2.3" fill="#2a66cc"/><circle cx="2" cy="5.4" r="1.2" fill="#1f4fae"/><circle cx="3.4" cy="3" r="0.8" fill="#dbe8fa"/></svg>
<div class="t" style="left:106px;top:311.5px;color:#1e1e1e;font-size:7px;transform:scaleX(0.927);">setup-lightshot</div>
<div class="t" style="left:231.2px;top:311.5px;color:#6c6c6c;font-size:7px;transform:scaleX(0.883);">07/01/2026 16:59</div>
<div class="t" style="left:306.2px;top:311.5px;color:#6c6c6c;font-size:7px;transform:scaleX(0.934);">Application</div>
<div class="t r" style="right:399.8px;top:311.5px;color:#6c6c6c;font-size:7px;transform:scaleX(0.826);">2,722 KB</div>
<svg style="left:89.6px;top:328.20000000000005px" width="4.6" height="3" viewBox="0 0 4.6 3"><path d="M0.4 0.4L2.3 2.3L4.2 0.4" stroke="#778" stroke-width="0.7" fill="none"/></svg>
<div class="t" style="left:97px;top:325.1px;color:#3b4f8a;font-size:7px;transform:scaleX(0.868);">Earlier this week</div>
<svg style="left:96.3px;top:338.2px" width="7" height="9.2" viewBox="0 0 7 9.2"><path d="M0.4 0.4H4.3L6.6 2.7V8.8H0.4Z" fill="#fff" stroke="#8f8f8f" stroke-width="0.75"/><path d="M4.3 0.4V2.7H6.6" fill="none" stroke="#8f8f8f" stroke-width="0.6"/></svg>
<div class="t" style="left:106px;top:338.9px;color:#1e1e1e;font-size:7px;transform:scaleX(0.822);">IMG_4205.HEIC</div>
<div class="t" style="left:231.2px;top:338.9px;color:#6c6c6c;font-size:7px;transform:scaleX(0.883);">05/01/2026 14:47</div>
<div class="t" style="left:306.2px;top:338.9px;color:#6c6c6c;font-size:7px;transform:scaleX(0.818);">HEIC File</div>
<div class="t r" style="right:399.8px;top:338.9px;color:#6c6c6c;font-size:7px;transform:scaleX(0.826);">1,499 KB</div>
<svg style="left:96.3px;top:353.6px" width="7" height="9.2" viewBox="0 0 7 9.2"><path d="M0.4 0.4H4.3L6.6 2.7V8.8H0.4Z" fill="#fff" stroke="#8f8f8f" stroke-width="0.75"/><path d="M4.3 0.4V2.7H6.6" fill="none" stroke="#8f8f8f" stroke-width="0.6"/></svg>
<div class="t" style="left:106px;top:354.3px;color:#1e1e1e;font-size:7px;transform:scaleX(0.81);">IMG_3933.HEIC</div>
<div class="t" style="left:231.2px;top:354.3px;color:#6c6c6c;font-size:7px;transform:scaleX(0.883);">05/01/2026 14:46</div>
<div class="t" style="left:306.2px;top:354.3px;color:#6c6c6c;font-size:7px;transform:scaleX(0.818);">HEIC File</div>
<div class="t r" style="right:399.8px;top:354.3px;color:#6c6c6c;font-size:7px;transform:scaleX(0.814);">931 KB</div>
<svg style="left:96px;top:369.8px" width="7.6" height="7.8" viewBox="0 0 7.6 7.8"><path d="M1.4 0.4H5L7.2 2.6V6.4Q7.2 7.4 6.2 7.4H1.4Q0.4 7.4 0.4 6.4V1.4Q0.4 0.4 1.4 0.4Z" fill="#fff" stroke="#a3b3cb" stroke-width="0.8"/><circle cx="3.7" cy="4" r="2.5" fill="#c4dcf4"/><circle cx="3.7" cy="4.1" r="1.5" fill="#2859a4"/></svg>
<div class="t" style="left:106px;top:369.7px;color:#1e1e1e;font-size:7px;transform:scaleX(0.888);">andrey-larionov-qO5xSjAqbGw-unsplash</div>
<div class="t" style="left:231.2px;top:369.7px;color:#6c6c6c;font-size:7px;transform:scaleX(0.883);">05/01/2026 14:44</div>
<div class="t" style="left:306.2px;top:369.7px;color:#6c6c6c;font-size:7px;transform:scaleX(0.756);">JPG File</div>
<div class="t r" style="right:399.8px;top:369.7px;color:#6c6c6c;font-size:7px;transform:scaleX(0.826);">2,681 KB</div>
<svg style="left:96px;top:385.20000000000005px" width="7.6" height="7.8" viewBox="0 0 7.6 7.8"><path d="M1.4 0.4H5L7.2 2.6V6.4Q7.2 7.4 6.2 7.4H1.4Q0.4 7.4 0.4 6.4V1.4Q0.4 0.4 1.4 0.4Z" fill="#fff" stroke="#a3b3cb" stroke-width="0.8"/><circle cx="3.7" cy="4" r="2.5" fill="#c4dcf4"/><circle cx="3.7" cy="4.1" r="1.5" fill="#2859a4"/></svg>
<div class="t" style="left:106px;top:385.1px;color:#1e1e1e;font-size:7px;transform:scaleX(0.888);">andrey-larionov-mhd80sZyUNY-unsplash</div>
<div class="t" style="left:231.2px;top:385.1px;color:#6c6c6c;font-size:7px;transform:scaleX(0.883);">05/01/2026 14:43</div>
<div class="t" style="left:306.2px;top:385.1px;color:#6c6c6c;font-size:7px;transform:scaleX(0.756);">JPG File</div>
<div class="t r" style="right:399.8px;top:385.1px;color:#6c6c6c;font-size:7px;transform:scaleX(0.826);">3,590 KB</div>
<svg style="left:96px;top:400.6px" width="7.6" height="7.8" viewBox="0 0 7.6 7.8"><path d="M1.4 0.4H5L7.2 2.6V6.4Q7.2 7.4 6.2 7.4H1.4Q0.4 7.4 0.4 6.4V1.4Q0.4 0.4 1.4 0.4Z" fill="#fff" stroke="#a3b3cb" stroke-width="0.8"/><circle cx="3.7" cy="4" r="2.5" fill="#c4dcf4"/><circle cx="3.7" cy="4.1" r="1.5" fill="#2859a4"/></svg>
<div class="t" style="left:106px;top:400.5px;color:#1e1e1e;font-size:7px;transform:scaleX(0.889);">amee-fairbank-brown-92iTtUsa8bs-unspl...</div>
<div class="t" style="left:231.2px;top:400.5px;color:#6c6c6c;font-size:7px;transform:scaleX(0.883);">05/01/2026 14:36</div>
<div class="t" style="left:306.2px;top:400.5px;color:#6c6c6c;font-size:7px;transform:scaleX(0.756);">JPG File</div>
<div class="t r" style="right:399.8px;top:400.5px;color:#6c6c6c;font-size:7px;transform:scaleX(0.826);">1,391 KB</div>
<div class="a" style="left:795px;top:69px;width:8px;height:341.8px;background:#f2f2f2;"></div>
<div class="a" style="left:795.5px;top:69px;width:7.5px;height:19.5px;background:#fafafa;border-radius:3px;"></div>
<div class="a" style="left:797.9px;top:76.2px;width:1.6px;height:9.5px;background:#6a6a6a;border-radius:1px;"></div>
<div class="a" style="left:775px;top:412px;width:13px;height:13px;border:1px solid #86b6da;background:#e2eff9;box-sizing:border-box;"></div>
<div class="a" style="left:778.6px;top:415.4px;width:5.8px;height:6px;background:#bdbdbd;"></div>
<svg style="left:790.6px;top:414.6px" width="7" height="7" viewBox="0 0 7 7"><rect x="0.6" y="0.6" width="5.2" height="4.4" rx="1" fill="none" stroke="#666" stroke-width="0.9"/><path d="M1.8 6H6.4V2" stroke="#888" stroke-width="0.8" fill="none"/></svg>
</div>
</body></html>
